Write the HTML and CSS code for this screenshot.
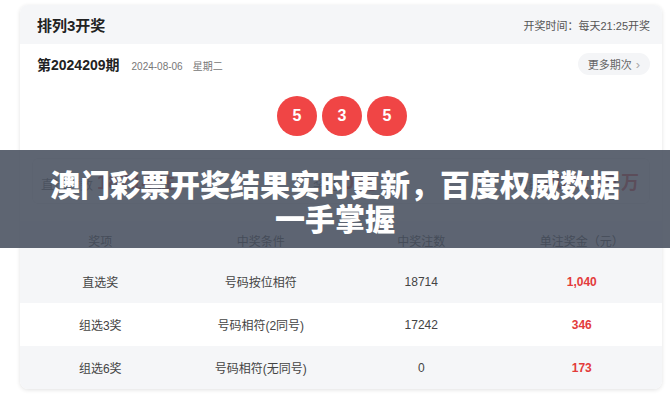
FILE: index.html
```html
<!DOCTYPE html>
<html lang="zh-CN">
<head>
    <meta charset="UTF-8">
    <meta name="viewport" content="width=device-width, initial-scale=1.0">
    <title>排列3开奖</title>
    <link rel="stylesheet" href="styles.css">
</head>
<body>
    <div id="page">
        <div class="card">
            <div class="cardHeader">
                <h1>排列3开奖</h1>
                <span class="drawTime">开奖时间：每天21:25开奖</span>
            </div>
            <div class="issueRow">
                <div class="issueInfo">
                    <strong>第2024209期</strong>
                    <span>2024-08-06</span>
                    <span>星期二</span>
                </div>
                <a class="moreBtn" href="#">更多期次 <span class="arrow">&#8250;</span></a>
            </div>
            <div class="balls">
                <span class="ball">5</span>
                <span class="ball">3</span>
                <span class="ball">5</span>
            </div>
            <div class="stats">
                <div class="stat"><span class="label">直选注数</span><span class="value">18714</span><span class="unit">注</span></div>
                <div class="stat"><span class="label">奖池</span><span class="value">0</span><span class="unit">元</span></div>
                <div class="stat"><span class="label">销量</span><span class="value">4032.20</span><span class="unit">万</span></div>
            </div>
            <table class="prizeTable">
                <thead>
                    <tr><th>奖项</th><th>中奖条件</th><th>中奖注数</th><th>单注奖金（元）</th></tr>
                </thead>
                <tbody>
                    <tr><td>直选奖</td><td>号码按位相符</td><td>18714</td><td class="money">1,040</td></tr>
                    <tr><td>组选3奖</td><td>号码相符(2同号)</td><td>17242</td><td class="money">346</td></tr>
                    <tr><td>组选6奖</td><td>号码相符(无同号)</td><td>0</td><td class="money">173</td></tr>
                </tbody>
            </table>
        </div>

        <div class="banner">
            <p>澳门彩票开奖结果实时更新，百度权威数据<br>一手掌握</p>
        </div>
    </div>
</body>
</html>
```

FILE: styles.css
```css
* {
    box-sizing: border-box;
}

body {
    margin: 0;
    padding: 0;
    background-color: #ffffff;
    font-family: "Liberation Sans", "Noto Sans CJK SC", sans-serif;
    color: #333333;
    overflow: hidden;
}

#page {
    position: relative;
    width: 670px;
    height: 400px;
    padding: 5px 8px 0 20px;
}

.card {
    width: 642px;
    border-radius: 8px;
    background-color: #ffffff;
    box-shadow: 0 1px 4px rgba(0, 0, 0, 0.12);
    overflow: hidden;
}

.cardHeader {
    display: flex;
    justify-content: space-between;
    align-items: center;
    height: 39px;
    padding: 0 12px 0 17px;
    background-color: #f5f6f8;
}

.cardHeader h1 {
    margin: 0;
    font-size: 15px;
    font-weight: bold;
    color: #222222;
}

.drawTime {
    font-size: 11px;
    color: #555555;
}

.issueRow {
    display: flex;
    justify-content: space-between;
    align-items: center;
    height: 40px;
    padding: 0 12px 0 17px;
}

.issueInfo {
    display: flex;
    align-items: baseline;
    gap: 10px;
}

.issueInfo strong {
    font-size: 14px;
    color: #222222;
    margin-right: 2px;
}

.issueInfo span {
    font-size: 10px;
    color: #777777;
}

.moreBtn {
    display: flex;
    align-items: center;
    gap: 4px;
    height: 22px;
    padding: 0 10px;
    border-radius: 11px;
    background-color: #f4f5f7;
    font-size: 11px;
    color: #666666;
    text-decoration: none;
}

.moreBtn .arrow {
    font-size: 13px;
    color: #aaaaaa;
}

.balls {
    display: flex;
    justify-content: center;
    gap: 5px;
    padding-top: 12px;
    margin-left: 2px;
}

.ball {
    display: flex;
    justify-content: center;
    align-items: center;
    width: 40px;
    height: 40px;
    border-radius: 50%;
    background-color: #f04545;
    color: #ffffff;
    font-size: 16px;
    font-weight: bold;
}

.stats {
    display: flex;
    justify-content: space-between;
    align-items: center;
    height: 46px;
    margin: 22px 12px 0 12px;
    padding: 0 10px 0 8px;
    border: 1px solid #eeeeee;
    border-radius: 6px;
}

.stat {
    display: flex;
    align-items: baseline;
    gap: 4px;
}

.stat .label {
    font-size: 13px;
    color: #666666;
}

.stat .value {
    font-size: 20px;
    font-weight: bold;
    color: #e33b3b;
}

.stat .unit {
    font-size: 18px;
    font-weight: bold;
    color: #e33b3b;
}

.prizeTable {
    width: 100%;
    margin-top: 17px;
    border-collapse: collapse;
    table-layout: fixed;
}

.prizeTable th {
    height: 39px;
    font-size: 12px;
    font-weight: normal;
    color: #333333;
    background-color: #f5f6f8;
}

.prizeTable td {
    height: 43px;
    text-align: center;
    font-size: 12px;
    color: #444444;
}

.prizeTable tbody tr:nth-child(odd) {
    background-color: #f5f6f8;
}

.prizeTable .money {
    color: #e33b3b;
    font-weight: bold;
}

.banner {
    position: absolute;
    left: 0;
    top: 150px;
    width: 670px;
    height: 98px;
    display: flex;
    justify-content: center;
    align-items: center;
    background-color: rgba(72, 80, 94, 0.88);
}

.banner p {
    margin: 0;
    padding-top: 2px;
    text-align: center;
    font-family: "Noto Sans CJK SC", sans-serif;
    font-size: 30px;
    font-weight: 900;
    line-height: 34px;
    color: #ffffff;
}
```
